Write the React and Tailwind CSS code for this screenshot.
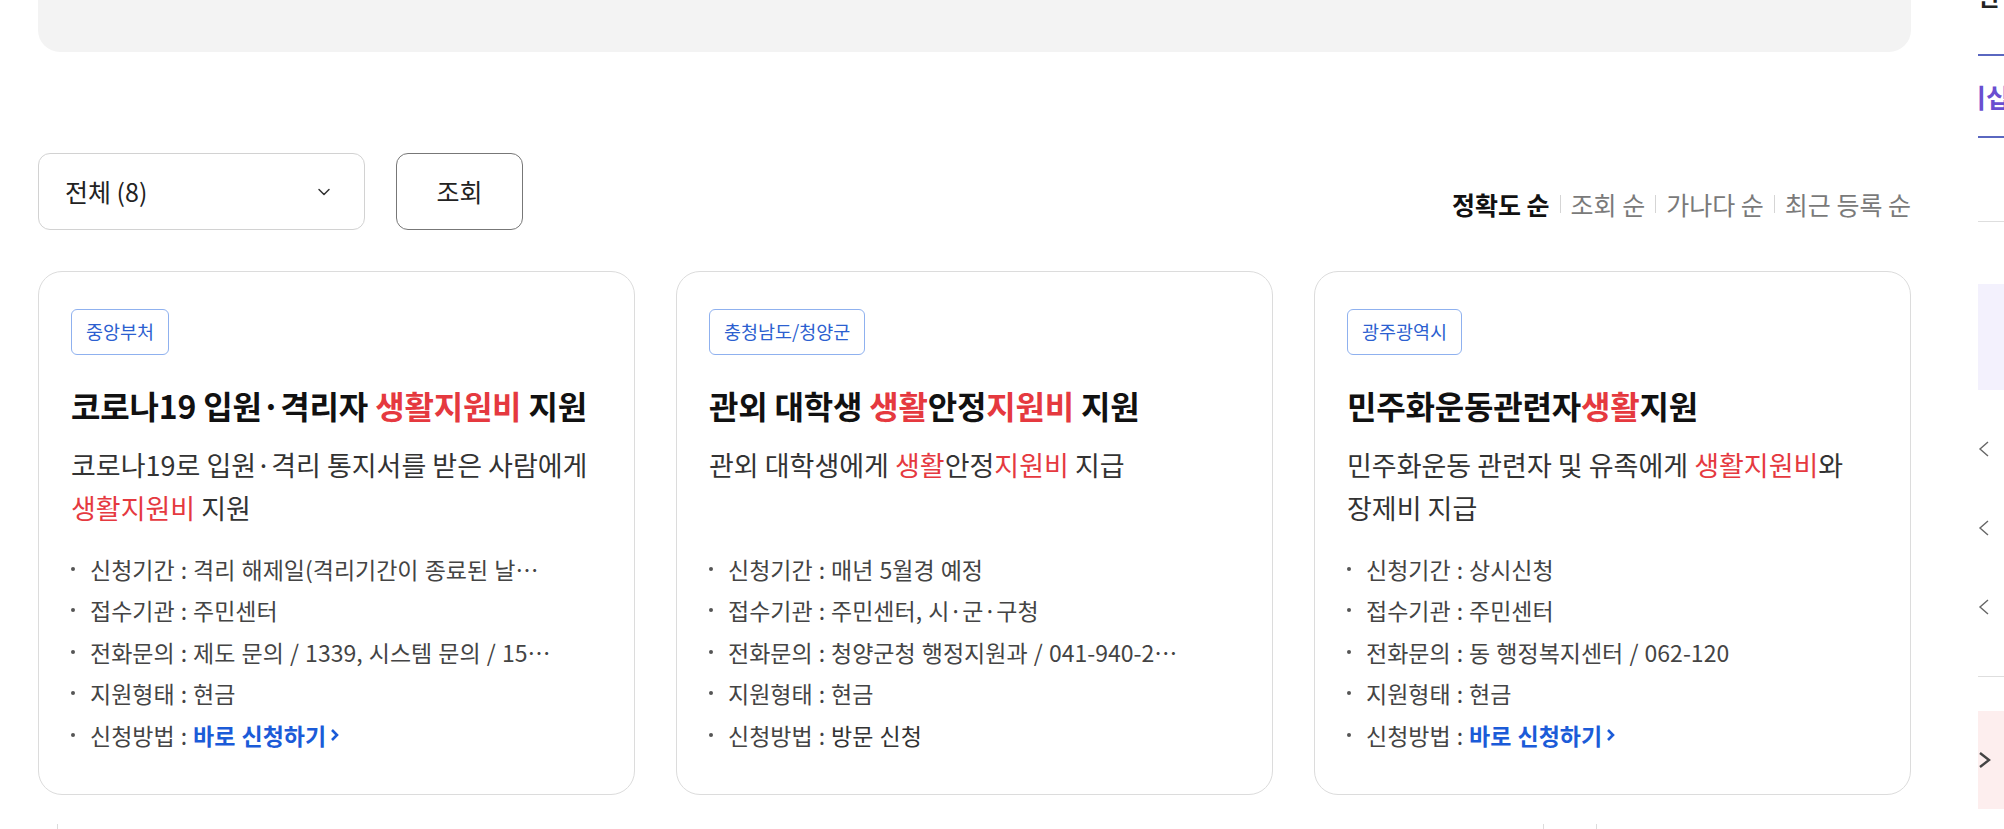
import { ChevronDown } from "lucide-react";

const cards = [
  {
    tag: "중앙부처",
    title: [["코로나19 입원·격리자 "], ["생활지원비", true], [" 지원"]],
    desc: [["코로나19로 입원·격리 통지서를 받은 사람에게 "], ["생활지원비", true], [" 지원"]],
    period: "격리 해제일(격리기간이 종료된 날…",
    office: "주민센터",
    phone: "제도 문의 / 1339, 시스템 문의 / 15…",
    type: "현금",
    method: null,
  },
  {
    tag: "충청남도/청양군",
    title: [["관외 대학생 "], ["생활", true], ["안정"], ["지원비", true], [" 지원"]],
    desc: [["관외 대학생에게 "], ["생활", true], ["안정"], ["지원비", true], [" 지급"]],
    period: "매년 5월경 예정",
    office: "주민센터, 시·군·구청",
    phone: "청양군청 행정지원과 / 041-940-2…",
    type: "현금",
    method: "방문 신청",
  },
  {
    tag: "광주광역시",
    title: [["민주화운동관련자"], ["생활", true], ["지원"]],
    desc: [["민주화운동 관련자 및 유족에게 "], ["생활지원비", true], ["와 장제비 지급"]],
    period: "상시신청",
    office: "주민센터",
    phone: "동 행정복지센터 / 062-120",
    type: "현금",
    method: null,
  },
];

function Marked({ parts }) {
  return parts.map(([text, red], i) =>
    red ? (
      <span key={i} className="text-[#e5393f]">
        {text}
      </span>
    ) : (
      <span key={i}>{text}</span>
    )
  );
}

// bullet + fixed-width label so every value starts at the same x
function Row({ label, children }) {
  return (
    <li className="flex items-center h-[41.5px] whitespace-nowrap overflow-hidden text-[#444]">
      <span className="w-[4px] h-[4px] rounded-full bg-[#555] shrink-0 mr-[15px]" />
      <span className="w-[86px] shrink-0">{label}</span>
      <span className="w-[16px] shrink-0 text-center">:</span>
      <span className="ml-[1px] overflow-hidden text-ellipsis">{children}</span>
    </li>
  );
}

function Card({ card }) {
  return (
    <div className="bg-white border border-[#dcdcdc] rounded-[24px] pt-[37px] pb-[38px] px-[32px]">
      <span className="inline-flex items-center h-[46px] px-[14px] border border-[#8fb1ef] rounded-[6px] text-[18.5px] text-[#2c5fd0]">
        {card.tag}
      </span>
      <h3 className="mt-[30px] h-[40px] leading-[40px] text-[32px] font-bold text-[#111] tracking-[-0.2px]">
        <Marked parts={card.title} />
      </h3>
      <p className="mt-[18px] h-[86px] text-[27px] leading-[43px] text-[#333] break-keep">
        <Marked parts={card.desc} />
      </p>
      <ul className="mt-[19px] text-[23px] [word-spacing:1px] pr-[10px]">
        <Row label="신청기간">{card.period}</Row>
        <Row label="접수기관">{card.office}</Row>
        <Row label="전화문의">{card.phone}</Row>
        <Row label="지원형태">{card.type}</Row>
        <Row label="신청방법">
          {card.method ? (
            <span className="text-[#333]">{card.method}</span>
          ) : (
            <span className="font-bold text-[#1b5bd8] inline-flex items-center">
              바로 신청하기
              <svg width="12" height="16" viewBox="0 0 12 16" className="ml-[3px]">
                <path d="M3 3l5 5-5 5" fill="none" stroke="#1b5bd8" strokeWidth="2.6" />
              </svg>
            </span>
          )}
        </Row>
      </ul>
    </div>
  );
}

function SideChevron() {
  return (
    <svg width="12" height="18" viewBox="0 0 12 18">
      <path d="M10 2L2 9l8 7" fill="none" stroke="#666" strokeWidth="1.4" />
    </svg>
  );
}

export default function App() {
  return (
    <div className="w-[2004px] h-[829px] overflow-hidden bg-white flex font-['Noto_Sans_CJK_KR','Noto_Sans',sans-serif]">
      <main className="ml-[38px] w-[1873px] shrink-0">
        <div className="h-[52px] bg-[#f3f3f3] rounded-b-[22px]" />

        <div className="mt-[101px] flex justify-between items-end">
          <div className="flex gap-[31px]">
            <div className="w-[327px] h-[77px] border border-[#d2d2d2] rounded-[12px] flex items-center justify-between pl-[26px] pr-[30px] text-[25px] text-[#222]">
              <span>전체 (8)</span>
              <ChevronDown size={20} strokeWidth={1.8} className="text-[#333]" />
            </div>
            <button className="w-[127px] h-[77px] border border-[#777] rounded-[12px] text-[25px] text-[#222] bg-white">
              조회
            </button>
          </div>
          <div className="flex items-center text-[25px] text-[#7a7a7a] mb-[7px]">
            <span className="font-bold text-[#111]">정확도 순</span>
            <span className="w-px h-[18px] bg-[#d5d5d5] mx-[10px]" />
            <span>조회 순</span>
            <span className="w-px h-[18px] bg-[#d5d5d5] mx-[10px]" />
            <span>가나다 순</span>
            <span className="w-px h-[18px] bg-[#d5d5d5] mx-[10px]" />
            <span>최근 등록 순</span>
          </div>
        </div>

        <div className="mt-[41px] grid grid-cols-3 gap-[41px]">
          {cards.map((card) => (
            <Card key={card.tag} card={card} />
          ))}
        </div>

        <div className="mt-[29px] flex h-[20px]">
          <span className="ml-[19px] w-px h-full bg-[#dcdcdc]" />
          <span className="ml-[1485px] w-px h-full bg-[#dcdcdc]" />
          <span className="ml-[52px] w-px h-full bg-[#dcdcdc]" />
        </div>
      </main>

      <aside className="ml-[67px] w-[200px] shrink-0 flex flex-col">
        <div className="h-[54px] overflow-hidden">
          <div className="-mt-[22px] text-[24px] font-bold text-[#222]">관심</div>
        </div>
        <div className="h-[2px] bg-[#5a67c0]" />
        <div className="h-[80px] flex items-center overflow-hidden">
          <span className="-ml-[16px] text-[26px] font-bold text-[#6a4fd0] whitespace-nowrap">이십</span>
        </div>
        <div className="h-[2px] bg-[#5a67c0]" />
        <div className="h-[83px]" />
        <div className="h-px bg-[#dedede]" />
        <div className="h-[62px]" />
        <div className="h-[106px] bg-[#f3f1fd]" />
        <div className="flex flex-col gap-[61px] mt-[50px]">
          <SideChevron />
          <SideChevron />
          <SideChevron />
        </div>
        <div className="mt-[60px] h-px bg-[#dedede]" />
        <div className="mt-[34px] h-[98px] bg-[#fdeeee] flex items-center">
          <svg width="14" height="20" viewBox="0 0 14 20">
            <path d="M2 3l9 7-9 7" fill="none" stroke="#444" strokeWidth="2.4" />
          </svg>
        </div>
      </aside>
    </div>
  );
}
